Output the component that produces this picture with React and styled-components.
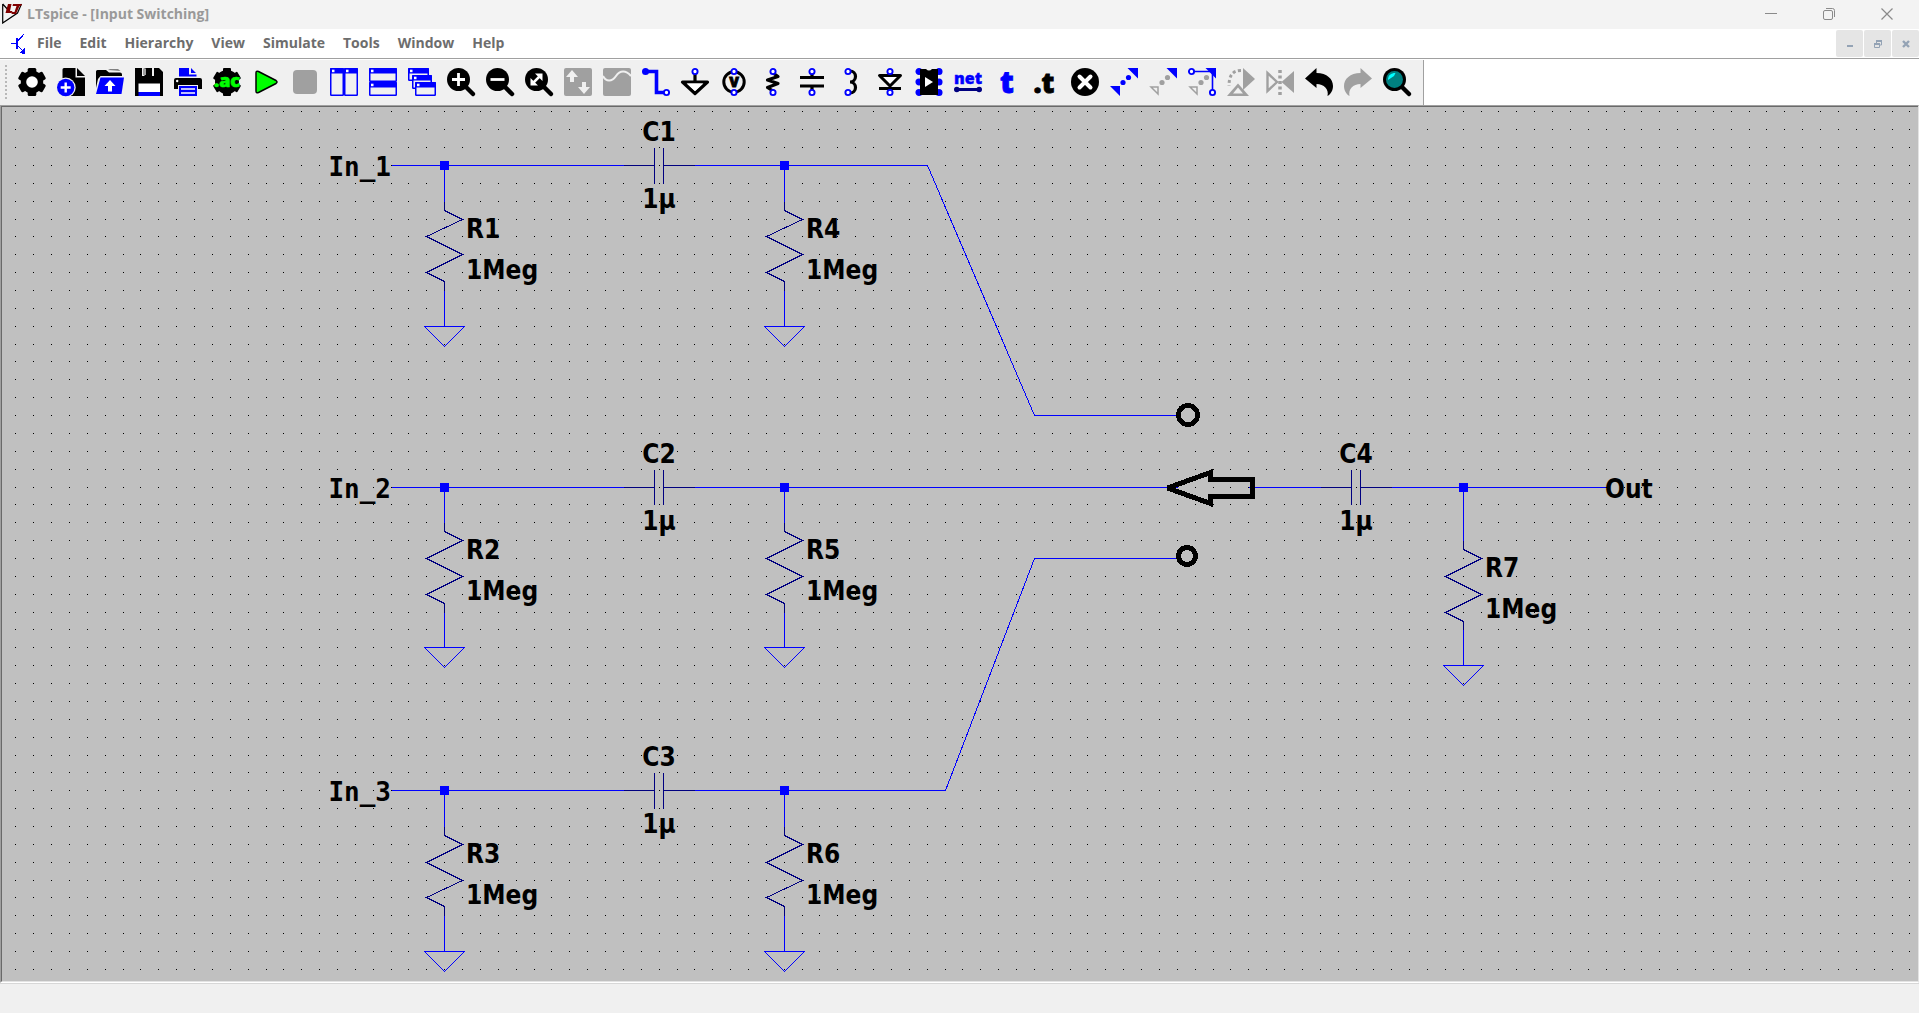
import React, { useLayoutEffect, useMemo, useRef, useState } from "react";
import styled, { createGlobalStyle } from "styled-components";

const BLUE = "#0000ff";
const NAVY = "#000080";
const GRAY = "#a0a0a0";
const FACE = "#f0f0f0";

const GlobalStyle = createGlobalStyle`
  * { box-sizing: border-box; }
  body { margin: 0; background: ${FACE}; }
`;

const Window = styled.div`
  display: flex;
  flex-direction: column;
  height: 100vh;
  overflow: hidden;
  font-family: "Open Sans", "Noto Sans", sans-serif;
`;

const TitleBar = styled.header`
  display: flex;
  align-items: flex-start;
  height: 29px;
  padding: 0 3px 0 2px;
  background: #f3f3f3;
`;

const Title = styled.h1`
  flex: 1;
  margin: 0 0 0 5px;
  font-size: 14px;
  line-height: 28px;
  font-weight: 700;
  color: #999999;
`;

const CaptionButton = styled.button`
  display: flex;
  align-items: center;
  justify-content: center;
  width: 58px;
  height: 28px;
  padding: 0;
  border: 0;
  background: transparent;
`;

const MenuBar = styled.nav`
  display: flex;
  align-items: center;
  height: 30px;
  padding-left: 11px;
  background: #ffffff;
  border-bottom: 1px solid ${GRAY};
`;

const Menus = styled.div`
  display: flex;
  flex: 1;
  margin-left: 3px;
`;

const MenuButton = styled.button`
  padding: 0 9px 1px;
  border: 0;
  background: transparent;
  font: 700 14px/20px "Open Sans", "Noto Sans", sans-serif;
  color: #6d6d6d;
`;

const ChildControls = styled.div`
  display: flex;
  gap: 1px;
`;

const ChildButton = styled.button`
  display: flex;
  align-items: center;
  justify-content: center;
  width: 27px;
  height: 27px;
  padding: 0;
  border: 0;
  border-radius: 2px;
  background: #e5e5e5;
`;

const ToolbarRow = styled.div`
  display: flex;
  height: 46px;
  padding-top: 1px;
  background: #ffffff;
`;

const Toolbar = styled.div`
  display: flex;
  align-items: center;
  gap: 11px;
  padding: 0 12px 1px 5px;
  background: ${FACE};
  border-right: 1px solid ${GRAY};
`;

const Grip = styled.span`
  width: 2px;
  height: 38px;
  background: repeating-linear-gradient(${FACE} 0 2px, #b8b8b8 2px 4px);
`;

const ToolButton = styled.button`
  flex: none;
  width: 28px;
  height: 28px;
  padding: 0;
  border: 0;
  background: transparent;
  svg { display: block; overflow: visible; }
`;

const Client = styled.main`
  display: flex;
  flex: 1;
  min-height: 0;
  border: 1px solid;
  border-color: ${GRAY} #e3e3e3 #ffffff ${GRAY};
`;

const Sheet = styled.div`
  flex: 1;
  min-width: 0;
  background: #c0c0c0;
  border: solid;
  border-width: 1px 0 1px 1px;
  border-color: #696969 #e3e3e3 #e3e3e3 #696969;
`;

const Drawing = styled.svg`
  display: block;
  width: 100%;
  height: 100%;
`;

const Label = styled.text`
  font-family: ${(p) => (p.$fixed ? '"DejaVu Sans Mono"' : '"DejaVu Sans Condensed", "DejaVu Sans"')}, sans-serif;
  font-size: 26px;
  font-weight: 700;
  fill: #000000;
`;

const StatusBar = styled.footer`
  height: 30px;
  background: ${FACE};
  border-top: 1px solid #d7d7d7;
`;

/* ---------- schematic ---------- */

const PITCH = 17.868;
const gx = (n) => Math.round(13.4 + PITCH * n);
const gy = (n) => Math.round(4.3 + PITCH * n);
const pt = ([x, y]) => `${gx(x) + 0.5},${gy(y) + 0.5}`;

const Line = ({ points, color = BLUE }) => (
  <polyline points={points.map(pt).join(" ")} fill="none" stroke={color} />
);

const Junction = ({ x, y }) => (
  <rect x={gx(x) - 4} y={gy(y) - 4} width="9" height="9" fill={BLUE} />
);

const Capacitor = ({ x, y, name, value }) => (
  <g>
    <Line color={NAVY} points={[[x - 2, y], [x - 0.25, y]]} />
    <Line color={NAVY} points={[[x - 0.25, y - 1], [x - 0.25, y + 1]]} />
    <Line color={NAVY} points={[[x + 0.25, y - 1], [x + 0.25, y + 1]]} />
    <Line color={NAVY} points={[[x + 0.25, y], [x + 2, y]]} />
    <Label x={gx(x)} y={gy(y) - 24} textAnchor="middle">{name}</Label>
    <Label x={gx(x)} y={gy(y) + 43} textAnchor="middle">{value}</Label>
  </g>
);

const Resistor = ({ x, y, name, value }) => (
  <g>
    <Line
      color={NAVY}
      points={[
        [x, y], [x, y + 0.5], [x + 1, y + 1], [x - 1, y + 2],
        [x + 1, y + 3], [x - 1, y + 4], [x, y + 4.5], [x, y + 5],
      ]}
    />
    <Line points={[[x, y + 5], [x, y + 7]]} />
    <path
      d={`M${gx(x) - 19.5} ${gy(y + 7) + 0.5}h40l-20 20z`}
      fill="none"
      stroke={BLUE}
    />
    <Label x={gx(x) + 22} y={gy(y) + 37}>{name}</Label>
    <Label x={gx(x) + 22} y={gy(y) + 78}>{value}</Label>
  </g>
);

const WIRES = [
  [[21, 3], [34, 3]],
  [[38, 3], [51, 3], [57, 17], [65, 17]],
  [[21, 21], [34, 21]],
  [[38, 21], [65, 21]],
  [[69, 21], [73, 21]],
  [[77, 21], [89, 21]],
  [[21, 38], [34, 38]],
  [[38, 38], [52, 38], [57, 25], [65, 25]],
  [[81, 21], [81, 24]],
];

const CAPACITORS = [
  { x: 36, y: 3, name: "C1" },
  { x: 36, y: 21, name: "C2" },
  { x: 36, y: 38, name: "C3" },
  { x: 75, y: 21, name: "C4" },
];

const BRANCHES = [
  { x: 24, y: 3, name: "R1" },
  { x: 24, y: 21, name: "R2" },
  { x: 24, y: 38, name: "R3" },
  { x: 43, y: 3, name: "R4" },
  { x: 43, y: 21, name: "R5" },
  { x: 43, y: 38, name: "R6" },
];

function Schematic() {
  const ref = useRef(null);
  const [size, setSize] = useState({ width: 0, height: 0 });

  useLayoutEffect(() => {
    const measure = () => {
      const box = ref.current.getBoundingClientRect();
      setSize({ width: box.width, height: box.height });
    };
    measure();
    window.addEventListener("resize", measure);
    return () => window.removeEventListener("resize", measure);
  }, []);

  const dots = useMemo(() => {
    let d = "";
    for (let r = 0; gy(r) < size.height; r += 1) {
      for (let c = 0; gx(c) < size.width; c += 1) d += `M${gx(c)} ${gy(r)}h1v1h-1z`;
    }
    return d;
  }, [size]);

  return (
    <Drawing ref={ref} role="img" aria-label="Input Switching schematic" shapeRendering="crispEdges">
      <path d={dots} fill="#000" />
      {WIRES.map((points, i) => <Line key={i} points={points} />)}
      {CAPACITORS.map((c) => <Capacitor key={c.name} {...c} value="1µ" />)}
      {BRANCHES.map(({ x, y, name }) => (
        <g key={name}>
          <Line points={[[x, y], [x, y + 2]]} />
          <Resistor x={x} y={y + 2} name={name} value="1Meg" />
          <Junction x={x} y={y} />
        </g>
      ))}
      <Resistor x={81} y={24} name="R7" value="1Meg" />
      <Junction x={81} y={21} />
      {[3, 21, 38].map((y, i) => (
        <Label key={y} $fixed x={gx(21)} y={gy(y) + 11} textAnchor="end">{`In_${i + 1}`}</Label>
      ))}
      <Label x={gx(89) - 1} y={gy(21) + 11}>Out</Label>
      <g fill="none" stroke="#000" strokeWidth="5">
        <circle cx="1186" cy="308" r="9.5" />
        <circle cx="1185" cy="449" r="8.5" />
        <path
          strokeMiterlimit="2"
          d="M1165.5 381L1208.5 365.5V372.5H1250.5V389.5H1208.5V396.5Z"
        />
      </g>
    </Drawing>
  );
}

/* ---------- toolbar icons ---------- */

const Pin = ({ x, y, fill = "#fff" }) => (
  <circle cx={x} cy={y} r="2.6" fill={fill} stroke={BLUE} strokeWidth="1.9" />
);

const Lens = ({ children }) => (
  <>
    <path d="M18 18L26 26" stroke="#000" strokeWidth="4.5" strokeLinecap="round" />
    <circle cx="11.5" cy="11.5" r="11.5" />
    {children}
  </>
);

const Pane = ({ x, y, w, h }) => (
  <>
    <rect x={x + 0.75} y={y + 0.75} width={w - 1.5} height={h - 1.5} rx="0.5" fill={FACE} stroke={BLUE} strokeWidth="1.5" />
    <rect x={x} y={y} width={w} height="5.5" rx="1" fill={BLUE} />
    <rect x={x + 2} y={y + 1.7} width="2.5" height="2.5" fill="#fff" />
  </>
);

const ICONS = [
  ["Settings", (
    <>
      {[0, 60, 120].map((a) => (
        <rect key={a} x="9.7" y="0" width="8.6" height="28" rx="1.5" transform={`rotate(${a} 14 14)`} />
      ))}
      <circle cx="14" cy="14" r="11.2" />
      <circle cx="14" cy="14" r="5.8" fill="#fff" />
    </>
  )],
  ["New schematic", (
    <>
      <path d="M5.500 1.500Q5.500 0 7 0H18.500V9.500H28V28H5.500Z" />
      <path d="M20 0L28 8H20Z" />
      <circle cx="8.700" cy="19.500" r="10" fill={FACE} />
      <circle cx="8.700" cy="19.500" r="8.700" fill={BLUE} />
      <path d="M8.700 14.500V24.500M3.700 19.500H13.700" stroke="#fff" strokeWidth="2.400" />
    </>
  )],
  ["Open", (
    <>
      <path d="M12 2L14 1H22L24.500 3Z" fill="#808080" />
      <path d="M0 3.500Q0 2 1.500 2H10L13 4.500H24Q26 4.500 26 6.500V8H4.500L2 11L0 20Z" />
      <path d="M4.500 9.500H28L25.500 26H0Z" fill={BLUE} />
      <path d="M14 12L19.500 18H16V23.500H12V18H8.500Z" fill="#fff" />
    </>
  )],
  ["Save", (
    <>
      <path d="M0 0H24L28 4V28H0Z" />
      <path d="M7 0H19V8H7Z" fill={FACE} />
      <path d="M9.500 0H17V8H9.500Z" fill="#000" />
      <path d="M8 0.500H11V7H8Z" fill="#a0a0a0" />
      <path d="M3.500 15.500H25V24H3.500Z" fill="#fff" />
      <path d="M3.500 24H25V28H3.500Z" fill={BLUE} />
    </>
  )],
  ["Print", (
    <>
      <path d="M5 0H15V6.500H22.500V8.500H5Z M17 0L22 5H17Z" fill={BLUE} />
      <path d="M2 10H26Q28 10 28 12V21H24V17H4V21H0V12Q0 10 2 10Z" />
      <circle cx="3.200" cy="13" r="1.200" fill="#fff" />
      <path d="M5 18H23V28H5Z" fill={BLUE} />
      <path d="M7 21H21M7 25H21" stroke="#fff" strokeWidth="1.300" />
    </>
  )],
  ["Edit simulation command", (
    <>
      {[0, 60, 120].map((a) => (
        <rect key={a} x="10" y="0" width="8" height="28" rx="1" transform={`rotate(${a} 14 14)`} />
      ))}
      <circle cx="14" cy="14" r="12" />
      <text x="14" y="19" textAnchor="middle" fontFamily="Open Sans, sans-serif" fontWeight="800" fontSize="18" fill="#00ff00" stroke="#00ff00" strokeWidth="0.600">.ac</text>
    </>
  )],
  ["Run", (
    <path d="M4 5Q4 2.500 6.500 3.500L24 12.500Q26 14 24 15.500L6.500 24.500Q4 25.500 4 23Z" fill="#00ff00" stroke="#000" strokeWidth="1.500" />
  )],
  ["Stop", <rect x="2" y="2" width="24" height="24" rx="4" fill={GRAY} />],
  ["Tile vertically", <><Pane x={0} y={0} w={14} h={28} /><Pane x={14} y={0} w={14} h={28} /></>],
  ["Tile horizontally", <><Pane x={0} y={0} w={28} h={14} /><Pane x={0} y={14} w={28} h={14} /></>],
  ["Cascade", <><Pane x={0} y={0} w={21} h={13} /><Pane x={4} y={7} w={20} h={14} /><Pane x={7} y={14} w={21} h={14} /></>],
  ["Zoom in", <Lens><path d="M11.500 5V18M5 11.500H18" stroke="#fff" strokeWidth="2.800" /></Lens>],
  ["Zoom out", <Lens><path d="M4.500 11.500H18.500" stroke="#fff" strokeWidth="2.800" /></Lens>],
  ["Zoom to fit", (
    <Lens><path d="M8 15L15 8" stroke="#fff" strokeWidth="2.500" /><path d="M17.500 5.500V13L10 5.500ZM5.500 17.500V10L13 17.500Z" fill="#fff" /></Lens>
  )],
  ["Autorange", (
    <>
      <rect width="28" height="28" rx="2" fill={GRAY} />
      <path d="M8 2L14 9H10V14H6V9H2ZM20 26L14 19H18V14H22V19H26Z" fill={FACE} />
    </>
  )],
  ["Waveform", (
    <>
      <rect width="28" height="28" rx="2" fill={GRAY} />
      <path d="M0 8C3 14 9 14 13 8S23 2 28 8" fill="none" stroke={FACE} strokeWidth="2" />
    </>
  )],
  ["Wire", (
    <>
      <path d="M4 3.500H14.500V24.500H22" fill="none" stroke={BLUE} strokeWidth="3.600" />
      <circle cx="3.500" cy="3.500" r="3.500" fill={BLUE} />
      <Pin x={24.500} y={24.500} />
    </>
  )],
  ["Ground", (
    <>
      <path d="M14 5V14M1.500 14H26.500L14 25.500Z" fill="none" stroke="#000" strokeWidth="3.200" strokeLinejoin="round" />
      <path d="M6 15.500H22L14 23Z" fill="#fff" />
      <Pin x={14} y={3.500} />
    </>
  )],
  ["Voltage source", (
    <>
      <circle cx="14" cy="14" r="10.200" fill={FACE} stroke="#000" strokeWidth="3" />
      <text x="14" y="19" textAnchor="middle" fontFamily="Open Sans, sans-serif" fontWeight="800" fontSize="14" stroke="#000" strokeWidth="0.800">V</text>
      <Pin x={14} y={3.500} /><Pin x={14} y={24.500} />
    </>
  )],
  ["Resistor", (
    <>
      <path d="M14 5L19 8.500L8.500 12L19 15.500L8.500 19.500L14 23" fill="none" stroke="#000" strokeWidth="3.200" strokeLinejoin="round" />
      <Pin x={14} y={3.500} /><Pin x={14} y={24.500} />
    </>
  )],
  ["Capacitor", (
    <>
      <path d="M14 4V9M14 18V24M2 9.500H26M2 18H26" stroke="#000" strokeWidth="3.200" />
      <Pin x={14} y={3.500} /><Pin x={14} y={24.500} />
    </>
  )],
  ["Inductor", (
    <>
      <path d="M13 3A5.500 5.500 0 0 1 13 14A5.500 5.500 0 0 1 13 25" fill="none" stroke="#000" strokeWidth="3.200" />
      <Pin x={11} y={3.500} /><Pin x={11} y={24.500} />
    </>
  )],
  ["Diode", (
    <>
      <path d="M3.500 7.500H24.500L14 18ZM3 20.500H25" fill="#fff" stroke="#000" strokeWidth="3" strokeLinejoin="round" />
      <Pin x={14} y={3.500} /><Pin x={14} y={24.500} />
    </>
  )],
  ["Component", (
    <>
      {[3.5, 14, 24.5].map((y) => (
        <g key={y}><Pin x={4} y={y} fill={BLUE} /><Pin x={24} y={y} fill={BLUE} /></g>
      ))}
      <path d="M5 1H11Q14 4 17 1H23V27H5Z" />
      <path d="M10 9L18 14L10 19Z" fill="#fff" />
    </>
  )],
  ["Label net", (
    <>
      <text x="14" y="16" textAnchor="middle" fontFamily="Open Sans, sans-serif" fontWeight="800" fontSize="16" fill={BLUE} stroke={BLUE} strokeWidth="0.400">net</text>
      <path d="M3 21.500H25" stroke={NAVY} strokeWidth="3" />
      <circle cx="2.800" cy="21.500" r="2.800" fill={NAVY} /><circle cx="25.200" cy="21.500" r="2.800" fill={NAVY} />
    </>
  )],
  ["Text", (
    <text x="14" y="25" textAnchor="middle" fontFamily="Open Sans, sans-serif" fontWeight="800" fontSize="30" fill={BLUE} stroke={BLUE} strokeWidth="0.800">t</text>
  )],
  ["SPICE directive", (
    <text x="12" y="25" textAnchor="middle" fontFamily="Open Sans, sans-serif" fontWeight="800" fontSize="28" stroke="#000" strokeWidth="0.800">.t</text>
  )],
  ["Delete", (
    <>
      <circle cx="14" cy="14" r="14" />
      <path d="M8.500 8.500L19.500 19.500M19.500 8.500L8.500 19.500" stroke="#fff" strokeWidth="4" strokeLinecap="round" />
    </>
  )],
  ["Move", (
    <g fill={BLUE}>
      <path d="M17.500 0H28V10.500ZM0 18H10V28Z" /><circle cx="13" cy="14.500" r="2.600" /><circle cx="18.500" cy="9.500" r="2.600" />
    </g>
  )],
  ["Duplicate", (
    <g fill={GRAY}>
      <path d="M17.500 0H28V10.500Z" fill={BLUE} /><path d="M2 19H9V26Z" fill="none" stroke={GRAY} strokeWidth="1.500" />
      <circle cx="13" cy="14.500" r="2.600" /><circle cx="18.500" cy="9.500" r="2.600" />
    </g>
  )],
  ["Drag", (
    <g fill={GRAY}>
      <path d="M2 19H9V26Z" fill="none" stroke={GRAY} strokeWidth="1.500" />
      <circle cx="13" cy="14.500" r="2.600" /><circle cx="18.500" cy="9.500" r="2.600" />
      <path d="M17.500 0H28V10.500Z" fill={BLUE} />
      <path d="M4 3.500H24.500V24" fill="none" stroke={BLUE} strokeWidth="1.600" />
      <Pin x={3.500} y={3.500} /><Pin x={24.500} y={24.500} />
    </g>
  )],
  ["Rotate", (
    <>
      <path d="M0 28L11 15.500L22 28Z" fill={GRAY} /><path d="M6 25.500L11 19.500L16 25.500Z" fill={FACE} />
      <path d="M16 0L28 11L16 22Z" fill={GRAY} />
      <path d="M14 2.500C6 2.500 2 7 2 18" fill="none" stroke={GRAY} strokeWidth="3" strokeDasharray="3 2.500" />
    </>
  )],
  ["Mirror", (
    <>
      <path d="M1.500 5V23L11 14Z" fill={FACE} stroke={GRAY} strokeWidth="2.400" />
      <path d="M28 3V25L15.500 14Z" fill={GRAY} />
      <path d="M14 2V27" stroke={GRAY} strokeWidth="3.500" strokeDasharray="3 2.500" />
    </>
  )],
  ["Undo", <path d="M0 10.500L11.500 0V5C22 5 28 11 28 18C28 22 26 26 22.500 28C24 21 19 16 11.500 16V20Z" />],
  ["Redo", <path fill={GRAY} d="M28 10.500L16.500 0V5C6 5 0 11 0 18C0 22 2 26 5.500 28C4 21 9 16 16.500 16V20Z" />],
  ["Find", (
    <Lens>
      <circle cx="11.500" cy="11.500" r="8.500" fill="#008080" />
      <path d="M5 12C5 7 8 5 12.500 5L11 8L8 10Z" fill="#00ffff" />
    </Lens>
  )],
];

const MENUS = ["File", "Edit", "Hierarchy", "View", "Simulate", "Tools", "Window", "Help"];

export default function App() {
  return (
    <Window>
      <GlobalStyle />
      <TitleBar>
        <svg width="20" height="24" aria-hidden="true">
          <path d="M0.700 4V23L15.500 13L19.500 4M0.700 4L8 12" fill="none" stroke="#000" strokeWidth="1.200" />
          <path d="M6 4H9.500L8 11H10.500L9.500 13H3.500ZM11 4H20L19 6H17.500L14 14H9.500L10 12H12.500L14.500 6H10.500Z" fill="#800000" />
        </svg>
        <Title>LTspice - [Input Switching]</Title>
        <CaptionButton aria-label="Minimize">
          <svg width="12" height="12"><path d="M0 5.500H12" stroke="#8a8a8a" /></svg>
        </CaptionButton>
        <CaptionButton aria-label="Restore">
          <svg width="12" height="12" fill="none" stroke="#8a8a8a">
            <rect x="0.500" y="2.500" width="9" height="9" rx="1.500" />
            <path d="M3 0.500H9.500Q11.500 0.500 11.500 2.500V9" />
          </svg>
        </CaptionButton>
        <CaptionButton aria-label="Close">
          <svg width="12" height="12"><path d="M0.500 0.500L11.500 11.500M11.500 0.500L0.500 11.500" stroke="#8a8a8a" strokeWidth="1.200" /></svg>
        </CaptionButton>
      </TitleBar>
      <MenuBar>
        <svg width="14" height="20" fill="none" stroke={BLUE} shapeRendering="crispEdges" aria-hidden="true">
          <path d="M0 9.500H5" />
          <path d="M6 4V15" strokeWidth="2" />
          <path d="M7 7L13 0M7 12L12 17" strokeWidth="1.200" />
          <path d="M14 20V14L8 19Z" fill={BLUE} stroke="none" />
        </svg>
        <Menus>
          {MENUS.map((m) => <MenuButton key={m}>{m}</MenuButton>)}
        </Menus>
        <ChildControls>
          <ChildButton aria-label="Minimize document">
            <svg width="8" height="8"><path d="M1 6H7" stroke="#94a3b5" strokeWidth="2" /></svg>
          </ChildButton>
          <ChildButton aria-label="Restore document">
            <svg width="8" height="8" fill="none" stroke="#94a3b5">
              <path d="M2.500 3V0.500H7.500V5H6" /><path d="M2 1H8" strokeWidth="2" />
              <path d="M0.500 3V7.500H5.500V3" /><path d="M0 4H6" strokeWidth="2" />
            </svg>
          </ChildButton>
          <ChildButton aria-label="Close document">
            <svg width="8" height="8"><path d="M1 1L7 7M7 1L1 7" stroke="#94a3b5" strokeWidth="2.400" /></svg>
          </ChildButton>
        </ChildControls>
      </MenuBar>
      <ToolbarRow>
        <Toolbar role="toolbar" aria-label="Main toolbar">
          <Grip />
          {ICONS.map(([name, art]) => (
            <ToolButton key={name} aria-label={name}>
              <svg width="28" height="28" viewBox="0 0 28 28">{art}</svg>
            </ToolButton>
          ))}
        </Toolbar>
      </ToolbarRow>
      <Client>
        <Sheet>
          <Schematic />
        </Sheet>
      </Client>
      <StatusBar />
    </Window>
  );
}
